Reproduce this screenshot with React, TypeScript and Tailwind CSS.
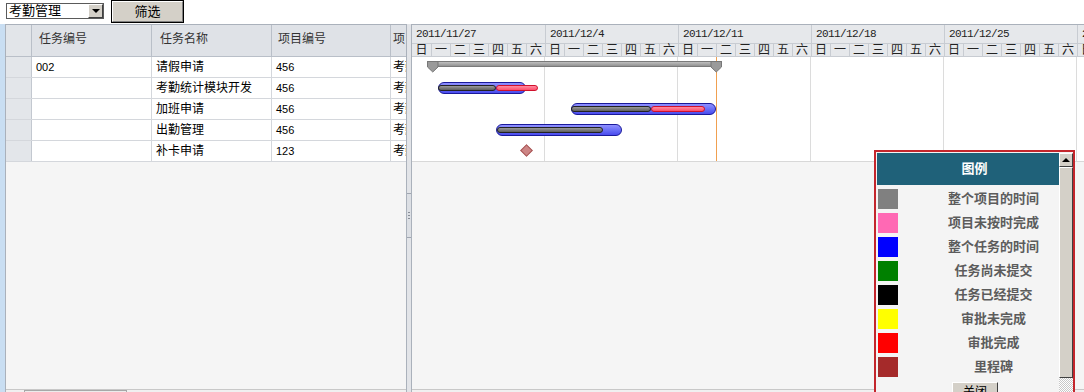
import React from 'react';

const days = ['日', '一', '二', '三', '四', '五', '六'];
const weeks = ['2011/11/27', '2011/12/4', '2011/12/11', '2011/12/18', '2011/12/25', '2012/1/1'];
const rows = [
  { id: '002', name: '请假申请', proj: '456' },
  { id: '', name: '考勤统计模块开发', proj: '456' },
  { id: '', name: '加班申请', proj: '456' },
  { id: '', name: '出勤管理', proj: '456' },
  { id: '', name: '补卡申请', proj: '123' },
];
const legend = [
  { c: '#808080', t: '整个项目的时间' },
  { c: '#ff69b4', t: '项目未按时完成' },
  { c: '#0000ff', t: '整个任务的时间' },
  { c: '#008000', t: '任务尚未提交' },
  { c: '#000000', t: '任务已经提交' },
  { c: '#ffff00', t: '审批未完成' },
  { c: '#ff0000', t: '审批完成' },
  { c: '#a52a2a', t: '里程碑' },
];

const tasks = [
  { top: 25, left: 26, w: 88, gray: [26, 58], pink: [84, 42] },
  { top: 46, left: 159, w: 145, gray: [159, 80], pink: [239, 54] },
  { top: 67, left: 84, w: 126, gray: [85, 106], pink: null as null | number[] },
];

const cjk = "font-['Liberation_Sans','Noto_Sans_CJK_SC',sans-serif]";

export default function App() {
  const dayCells = Array.from({ length: 36 }, (_, i) => days[i % 7]);
  return (
    <div className={`relative w-[1084px] h-[392px] overflow-hidden bg-white text-black ${cjk}`}>
      {/* toolbar */}
      <div className="h-[24px] flex items-start">
        <div className="ml-[6px] mt-[3px] w-[98px] h-[16px] border border-[#5a5a5a] bg-white flex items-center">
          <span className="flex-1 pl-[2px] text-[13px] leading-[14px]">考勤管理</span>
          <div className="w-[15px] h-[14px] bg-[#d4d0c8] border-t border-l border-t-white border-l-white border-r border-b border-r-[#404040] border-b-[#404040] flex items-center justify-center">
            <div className="w-0 h-0 border-l-[4px] border-r-[4px] border-t-[4px] border-l-transparent border-r-transparent border-t-black" />
          </div>
        </div>
        <div className="ml-[7px] w-[73px] h-[23px] border border-black bg-[#d4d0c8] flex items-center justify-center text-[13px]">
          <div className="w-full h-full border-t border-l border-t-white border-l-white border-r border-b border-r-[#808080] border-b-[#808080] flex items-center justify-center">
            筛选
          </div>
        </div>
      </div>

      {/* main */}
      <div className="flex h-[368px]">
        <div className="w-[5px] shrink-0 bg-[#c9def2]" />
        {/* left grid */}
        <div className="w-[402px] shrink-0 flex flex-col border-l border-t border-r border-[#aab1bb] bg-[#f5f5f5] overflow-hidden">
          <div className="h-[32px] shrink-0 flex bg-[#dfe2e7] border-b border-[#b9bfc8] text-[12px] text-[#333]">
            <div className="w-[26px] shrink-0 border-r border-[#b9bfc8] bg-[#e2e5e9]" />
            <div className="w-[120px] shrink-0 border-r border-[#b9bfc8] pl-[7px] pt-[5px]">任务编号</div>
            <div className="w-[120px] shrink-0 border-r border-[#b9bfc8] pl-[8px] pt-[5px]">任务名称</div>
            <div className="w-[119px] shrink-0 border-r border-[#b9bfc8] pl-[6px] pt-[5px]">项目编号</div>
            <div className="w-[120px] shrink-0 pl-[2px] pt-[5px] whitespace-nowrap">项目名称</div>
          </div>
          {rows.map((r, i) => (
            <div key={i} className="h-[21px] shrink-0 flex border-b border-[#d4d7dc] bg-white">
              <div className="w-[26px] shrink-0 border-r border-[#c3c8d0] bg-[#e3e6ea]" />
              <div className="w-[120px] shrink-0 border-r border-[#d4d7dc] pl-[4px] flex items-center text-[11px] font-['Liberation_Sans',sans-serif]">{r.id}</div>
              <div className="w-[120px] shrink-0 border-r border-[#d4d7dc] pl-[4px] flex items-center text-[12px] whitespace-nowrap">{r.name}</div>
              <div className="w-[119px] shrink-0 border-r border-[#d4d7dc] pl-[4px] flex items-center text-[11px] font-['Liberation_Sans',sans-serif]">{r.proj}</div>
              <div className="w-[120px] shrink-0 pl-[2px] flex items-center text-[12px] whitespace-nowrap">考勤管理</div>
            </div>
          ))}
          <div className="flex-1" />
          <div className="h-[3px] shrink-0 border-t border-[#c8c8c8] bg-[#f0f0f0] relative">
            <div className="absolute left-[18px] top-0 w-[103px] h-[6px] border border-[#a8a8a8] bg-[#ececec]" />
          </div>
        </div>

        {/* splitter */}
        <div className="w-[5px] shrink-0 bg-[#e2e4e8] border-r border-[#aab1bb] flex flex-col">
          <div className="h-[169px] shrink-0" />
          <div className="h-[45px] shrink-0 border-y border-[#a0a6b0] bg-[#dcdfe4] flex flex-col items-center justify-center gap-[2px]">
            <div className="w-[2px] h-[1px] bg-[#8a8f98]" />
            <div className="w-[2px] h-[1px] bg-[#8a8f98]" />
            <div className="w-[2px] h-[1px] bg-[#8a8f98]" />
          </div>
        </div>

        {/* gantt */}
        <div className="w-[672px] shrink-0 flex flex-col border-t border-[#aab1bb] bg-[#f5f5f5] overflow-hidden">
          <div className="h-[19px] shrink-0 flex bg-[#e6e8eb] border-b border-[#c8ccd2]">
            {weeks.map((w, i) => (
              <div key={i} className="w-[133px] shrink-0 border-l border-[#c8ccd2] first:border-l-0 pl-[4px] pt-[3px] text-[11px] leading-[12px] tracking-[-0.6px] font-['Liberation_Mono',monospace] text-[#222] whitespace-nowrap">
                {w}
              </div>
            ))}
          </div>
          <div className="h-[13px] shrink-0 flex bg-[#e6e8eb] border-b border-[#c8ccd2]">
            {dayCells.map((d, i) => (
              <div key={i} className="w-[19px] shrink-0 border-l border-[#c8ccd2] first:border-l-0 flex items-center justify-center text-[12px] leading-[12px] text-[#222]">
                {d}
              </div>
            ))}
          </div>
          <div className="h-[105px] shrink-0 relative bg-white border-b border-[#d8d8d8]">
            {[1, 2, 3, 4, 5].map((k) => (
              <div key={k} className="absolute top-0 bottom-0 w-px bg-[#dcdcdc]" style={{ left: k * 133 - 1 }} />
            ))}
            <div className="absolute top-0 bottom-0 left-[304px] w-px bg-[#f0a050]" />
            {/* project bar */}
            <svg className="absolute left-[15px] top-[4px]" width="296" height="12" viewBox="0 0 296 12">
              <defs>
                <linearGradient id="pg" x1="0" y1="0" x2="0" y2="1">
                  <stop offset="0" stopColor="#c4c4c4" />
                  <stop offset="1" stopColor="#8c8c8c" />
                </linearGradient>
              </defs>
              <rect x="0.5" y="0.5" width="294" height="5" fill="url(#pg)" stroke="#7a7a7a" />
              <polygon points="0.5,0.5 11,0.5 11,6 5.75,11 0.5,6" fill="#9a9a9a" stroke="#777" />
              <polygon points="284,0.5 294.5,0.5 294.5,6 289.25,11 284,6" fill="#9a9a9a" stroke="#777" />
            </svg>
            {tasks.map((t, i) => (
              <React.Fragment key={i}>
                <div
                  className="absolute h-[12px] rounded-full border border-[#1a1a9a] bg-linear-to-b from-[#9090ff] to-[#4a4aee]"
                  style={{ left: t.left, top: t.top, width: t.w }}
                />
                <div
                  className="absolute h-[6px] rounded-full border border-[#222] bg-linear-to-b from-[#9a9a9a] to-[#5e5e5e]"
                  style={{ left: t.gray[0], top: t.top + 3, width: t.gray[1] }}
                />
                {t.pink && (
                  <div
                    className="absolute h-[6px] rounded-full border border-[#d0102c] bg-linear-to-b from-[#ff8aa0] to-[#ff4a6a]"
                    style={{ left: t.pink[0], top: t.top + 3, width: t.pink[1] }}
                  />
                )}
              </React.Fragment>
            ))}
            <div className="absolute left-[110px] top-[89px] w-[9px] h-[9px] rotate-45 bg-[#cd8585] border border-[#a85858]" />
          </div>
          <div className="flex-1" />
          <div className="h-[3px] shrink-0 border-t border-[#c8c8c8] bg-[#f0f0f0]" />
        </div>
      </div>

      {/* legend overlay */}
      <div className="absolute left-[874px] top-[150px] w-[201px] h-[260px] border-2 border-[#c3262c] bg-[#f4f4f4] p-px flex">
        <div className="w-[182px] shrink-0 flex flex-col">
          <div className="h-[32px] shrink-0 bg-[#1f6179] text-white font-bold text-[13px] flex items-center justify-center pl-[13px]">
            图例
          </div>
          <div className="pt-[2px]">
            {legend.map((l, i) => (
              <div key={i} className="h-[24px] flex items-center">
                <div className="w-[51px] shrink-0 pl-px">
                  <div className="w-[20px] h-[20px]" style={{ background: l.c }} />
                </div>
                <div className="flex-1 text-center text-[13px] font-bold text-[#5c5c5c] whitespace-nowrap">{l.t}</div>
              </div>
            ))}
          </div>
          <div className="ml-[75px] mt-[3px] w-[46px] h-[20px] bg-[#d4d0c8] border-t border-l border-t-white border-l-white border-r border-b border-r-[#404040] border-b-[#404040] flex items-center justify-center text-[12px]">
            关闭
          </div>
        </div>
        <div className="w-[14px] shrink-0 flex flex-col">
          <div className="h-[14px] shrink-0 bg-[#d4d0c8] border-t border-l border-t-white border-l-white border-r border-b border-r-[#404040] border-b-[#404040] flex items-center justify-center">
            <div className="w-0 h-0 border-l-[4px] border-r-[4px] border-b-[4px] border-l-transparent border-r-transparent border-b-black" />
          </div>
          <div className="h-[211px] shrink-0 bg-[#d4d0c8] border-t border-l border-t-white border-l-white border-r border-b border-r-[#404040] border-b-[#404040]" />
          <div className="flex-1 bg-[repeating-conic-gradient(#c8c8c8_0%_25%,#ffffff_0%_50%)] bg-[length:2px_2px]" />
        </div>
      </div>
    </div>
  );
}
